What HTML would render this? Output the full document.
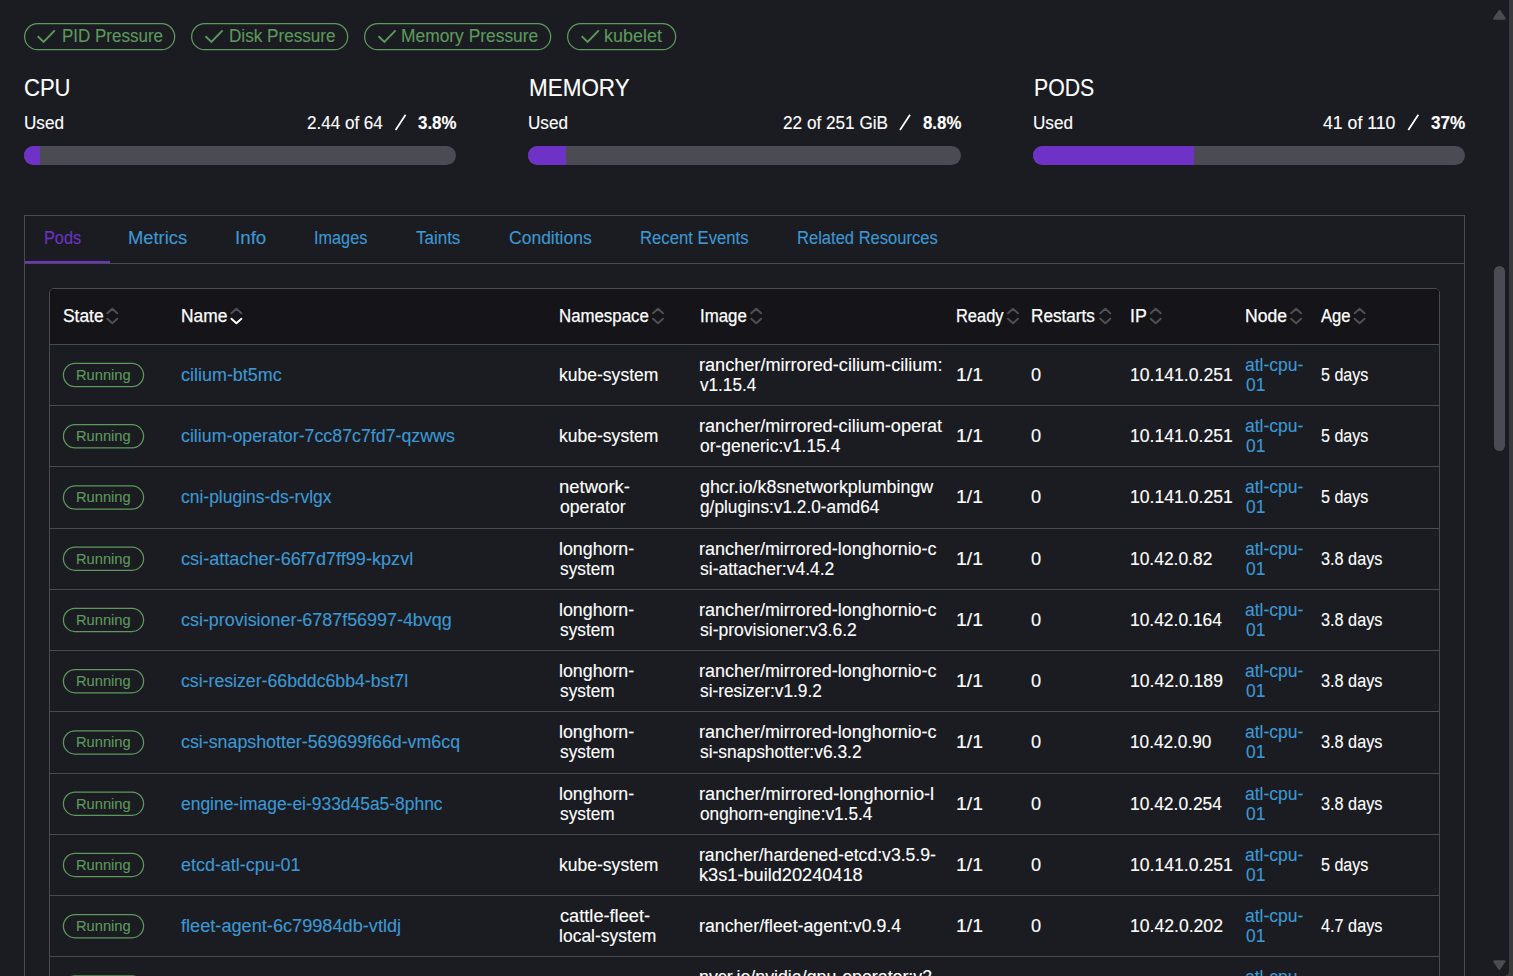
<!DOCTYPE html>
<html><head><meta charset="utf-8"><title>Node detail</title>
<style>
html,body{margin:0;padding:0;}
body{width:1513px;height:976px;overflow:hidden;background:#1b1c21;position:relative;font-family:"Liberation Sans",sans-serif;font-size:17.5px;color:#ffffff;}
.t{position:absolute;white-space:pre;line-height:20px;-webkit-text-stroke:0.12px currentColor;}
.h{-webkit-text-stroke:0.25px #fff;}
.r{position:absolute;box-sizing:border-box;}
svg{position:absolute;left:0;top:0;overflow:visible;}
</style></head><body>

<div class="r" style="left:1505px;top:0px;width:8px;height:976px;background:#3a3a3b;"></div>
<div class="r" style="left:0px;top:-10px;width:1509px;height:986px;background:#1b1c21;border-bottom-right-radius:5px;"></div>
<div class="r" style="left:1494px;top:266px;width:11px;height:185px;background:#4a4b53;border-radius:5.5px;"></div>
<svg width="1513" height="976"><path d="M1499.5 11.1 L1504.6 18.5 L1494.4 18.5 Z" fill="#4a4b53" stroke="#4a4b53" stroke-width="2.4" stroke-linejoin="round"/><path d="M1499.35 968.7 L1504.3 961.4 L1494.4 961.4 Z" fill="#4a4b53" stroke="#4a4b53" stroke-width="2.4" stroke-linejoin="round"/></svg>
<div class="r" style="left:24.0px;top:146px;width:432.3px;height:19px;background:#4a4b53;border-radius:9.5px;overflow:hidden;"><div style="width:16.4px;height:100%;background:#6f32c6;"></div></div>
<div class="r" style="left:528.3px;top:146px;width:432.3px;height:19px;background:#4a4b53;border-radius:9.5px;overflow:hidden;"><div style="width:38.0px;height:100%;background:#6f32c6;"></div></div>
<div class="r" style="left:1033.0px;top:146px;width:432.3px;height:19px;background:#4a4b53;border-radius:9.5px;overflow:hidden;"><div style="width:161.2px;height:100%;background:#6f32c6;"></div></div>
<div class="r" style="left:24px;top:215px;width:1441px;height:800px;border:1px solid #4a4b52;"></div>
<div class="r" style="left:25px;top:263px;width:1439px;height:1px;background:#4a4b52;"></div>
<div class="r" style="left:25px;top:260.5px;width:85px;height:2.5px;background:#6f32c6;"></div>
<div class="r" style="left:49px;top:288px;width:1391px;height:720px;border:1px solid #4a4b52;border-radius:5px;background:#1b1c21;overflow:hidden;"></div>
<div class="r" style="left:50px;top:289px;width:1389px;height:55px;background:#141419;border-top-left-radius:4px;border-top-right-radius:4px;"></div>
<div class="r" style="left:50px;top:344px;width:1389px;height:1px;background:#4a4b52;"></div>
<div class="r" style="left:50px;top:405px;width:1389px;height:1px;background:#4a4b52;"></div>
<div class="r" style="left:50px;top:466px;width:1389px;height:1px;background:#4a4b52;"></div>
<div class="r" style="left:50px;top:528px;width:1389px;height:1px;background:#4a4b52;"></div>
<div class="r" style="left:50px;top:589px;width:1389px;height:1px;background:#4a4b52;"></div>
<div class="r" style="left:50px;top:650px;width:1389px;height:1px;background:#4a4b52;"></div>
<div class="r" style="left:50px;top:711px;width:1389px;height:1px;background:#4a4b52;"></div>
<div class="r" style="left:50px;top:773px;width:1389px;height:1px;background:#4a4b52;"></div>
<div class="r" style="left:50px;top:834px;width:1389px;height:1px;background:#4a4b52;"></div>
<div class="r" style="left:50px;top:895px;width:1389px;height:1px;background:#4a4b52;"></div>
<div class="r" style="left:50px;top:956px;width:1389px;height:1px;background:#4a4b52;"></div>
<svg width="1513" height="976" fill="none" stroke-linecap="round" stroke-linejoin="round"><rect x="24.625" y="23.625" width="150.05" height="26.05" rx="13.03" stroke="#5d995d" stroke-width="1.25"/><rect x="191.625" y="23.625" width="156.05" height="26.05" rx="13.03" stroke="#5d995d" stroke-width="1.25"/><rect x="364.625" y="23.625" width="186.05" height="26.05" rx="13.03" stroke="#5d995d" stroke-width="1.25"/><rect x="567.625" y="23.625" width="108.05" height="26.05" rx="13.03" stroke="#5d995d" stroke-width="1.25"/><path d="M37.7 36.3 L43.6 42 L54.8 30.4" stroke="#5d995d" stroke-width="1.9" stroke-linecap="butt" stroke-linejoin="miter"/><path d="M205.5 36.3 L211.4 42 L222.6 30.4" stroke="#5d995d" stroke-width="1.9" stroke-linecap="butt" stroke-linejoin="miter"/><path d="M378.5 36.3 L384.4 42 L395.6 30.4" stroke="#5d995d" stroke-width="1.9" stroke-linecap="butt" stroke-linejoin="miter"/><path d="M581.7 36.3 L587.6 42 L598.8 30.4" stroke="#5d995d" stroke-width="1.9" stroke-linecap="butt" stroke-linejoin="miter"/><rect x="63.42" y="363.43" width="80.15" height="23.15" rx="11.57" stroke="#5d995d" stroke-width="1.25"/><rect x="63.42" y="424.68" width="80.15" height="23.15" rx="11.57" stroke="#5d995d" stroke-width="1.25"/><rect x="63.42" y="485.93" width="80.15" height="23.15" rx="11.57" stroke="#5d995d" stroke-width="1.25"/><rect x="63.42" y="547.17" width="80.15" height="23.15" rx="11.57" stroke="#5d995d" stroke-width="1.25"/><rect x="63.42" y="608.42" width="80.15" height="23.15" rx="11.57" stroke="#5d995d" stroke-width="1.25"/><rect x="63.42" y="669.67" width="80.15" height="23.15" rx="11.57" stroke="#5d995d" stroke-width="1.25"/><rect x="63.42" y="730.92" width="80.15" height="23.15" rx="11.57" stroke="#5d995d" stroke-width="1.25"/><rect x="63.42" y="792.17" width="80.15" height="23.15" rx="11.57" stroke="#5d995d" stroke-width="1.25"/><rect x="63.42" y="853.42" width="80.15" height="23.15" rx="11.57" stroke="#5d995d" stroke-width="1.25"/><rect x="63.42" y="914.67" width="80.15" height="23.15" rx="11.57" stroke="#5d995d" stroke-width="1.25"/><rect x="63.42" y="975.92" width="80.15" height="23.15" rx="11.57" stroke="#5d995d" stroke-width="1.25"/><path d="M107.3 313.3 L112.3 308.7 L117.3 313.3" stroke="#4f5058" stroke-width="1.9"/><path d="M107.3 318.7 L112.3 323.3 L117.3 318.7" stroke="#4f5058" stroke-width="1.9"/><path d="M231.4 313.3 L236.4 308.7 L241.4 313.3" stroke="#4f5058" stroke-width="1.9"/><path d="M231.4 318.7 L236.4 323.3 L241.4 318.7" stroke="#ffffff" stroke-width="1.9"/><path d="M653.0 313.3 L658.0 308.7 L663.0 313.3" stroke="#4f5058" stroke-width="1.9"/><path d="M653.0 318.7 L658.0 323.3 L663.0 318.7" stroke="#4f5058" stroke-width="1.9"/><path d="M751.2 313.3 L756.2 308.7 L761.2 313.3" stroke="#4f5058" stroke-width="1.9"/><path d="M751.2 318.7 L756.2 323.3 L761.2 318.7" stroke="#4f5058" stroke-width="1.9"/><path d="M1008.0 313.3 L1013.0 308.7 L1018.0 313.3" stroke="#4f5058" stroke-width="1.9"/><path d="M1008.0 318.7 L1013.0 323.3 L1018.0 318.7" stroke="#4f5058" stroke-width="1.9"/><path d="M1100.3 313.3 L1105.3 308.7 L1110.3 313.3" stroke="#4f5058" stroke-width="1.9"/><path d="M1100.3 318.7 L1105.3 323.3 L1110.3 318.7" stroke="#4f5058" stroke-width="1.9"/><path d="M1150.7 313.3 L1155.7 308.7 L1160.7 313.3" stroke="#4f5058" stroke-width="1.9"/><path d="M1150.7 318.7 L1155.7 323.3 L1160.7 318.7" stroke="#4f5058" stroke-width="1.9"/><path d="M1291.1 313.3 L1296.1 308.7 L1301.1 313.3" stroke="#4f5058" stroke-width="1.9"/><path d="M1291.1 318.7 L1296.1 323.3 L1301.1 318.7" stroke="#4f5058" stroke-width="1.9"/><path d="M1354.6 313.3 L1359.6 308.7 L1364.6 313.3" stroke="#4f5058" stroke-width="1.9"/><path d="M1354.6 318.7 L1359.6 323.3 L1364.6 318.7" stroke="#4f5058" stroke-width="1.9"/><path d="M395.6 130.0 L405.6 114.7" stroke="#ffffff" stroke-width="1.75" stroke-linecap="butt"/><path d="M900.0 130.0 L910.0 114.7" stroke="#ffffff" stroke-width="1.75" stroke-linecap="butt"/><path d="M1408.3 130.0 L1418.3 114.7" stroke="#ffffff" stroke-width="1.75" stroke-linecap="butt"/></svg>
<span class="t" style="left:61.63px;top:26.00px;transform:scaleX(0.9704);transform-origin:0 0;color:#5d995d;">PID Pressure</span>
<span class="t" style="left:228.52px;top:26.00px;transform:scaleX(0.9778);transform-origin:0 0;color:#5d995d;">Disk Pressure</span>
<span class="t" style="left:401.01px;top:26.00px;transform:scaleX(0.9937);transform-origin:0 0;color:#5d995d;">Memory Pressure</span>
<span class="t" style="left:604.37px;top:26.00px;transform:scaleX(1.0258);transform-origin:0 0;color:#5d995d;">kubelet</span>
<span class="t" style="left:23.98px;top:78.20px;transform:scaleX(0.9185);transform-origin:0 0;font-size:24px;">CPU</span>
<span class="t" style="left:528.86px;top:78.20px;transform:scaleX(0.9356);transform-origin:0 0;font-size:24px;">MEMORY</span>
<span class="t" style="left:1033.71px;top:78.20px;transform:scaleX(0.8863);transform-origin:0 0;font-size:24px;">PODS</span>
<span class="t" style="left:23.92px;top:112.90px;transform:scaleX(0.9790);transform-origin:0 0;">Used</span>
<span class="t" style="left:528.32px;top:112.90px;transform:scaleX(0.9790);transform-origin:0 0;">Used</span>
<span class="t" style="left:1033.02px;top:112.90px;transform:scaleX(0.9790);transform-origin:0 0;">Used</span>
<span class="t" style="left:306.70px;top:112.90px;transform:scaleX(0.9742);transform-origin:0 0;">2.44 of 64</span>
<span class="t" style="left:418.40px;top:112.60px;transform:scaleX(0.8891);transform-origin:0 0;font-size:19px;font-weight:700;">3.8%</span>
<span class="t" style="left:782.60px;top:112.90px;transform:scaleX(0.9817);transform-origin:0 0;">22 of 251 GiB</span>
<span class="t" style="left:922.60px;top:112.60px;transform:scaleX(0.8868);transform-origin:0 0;font-size:19px;font-weight:700;">8.8%</span>
<span class="t" style="left:1322.50px;top:112.90px;transform:scaleX(1.0104);transform-origin:0 0;">41 of 110</span>
<span class="t" style="left:1431.00px;top:112.60px;transform:scaleX(0.9047);transform-origin:0 0;font-size:19px;font-weight:700;">37%</span>
<span class="t" style="left:44.07px;top:227.70px;transform:scaleX(0.9300);transform-origin:0 0;color:#6f32c6;">Pods</span>
<span class="t" style="left:128.25px;top:227.70px;transform:scaleX(1.0478);transform-origin:0 0;color:#3d98d3;">Metrics</span>
<span class="t" style="left:235.43px;top:227.70px;transform:scaleX(1.0708);transform-origin:0 0;color:#3d98d3;">Info</span>
<span class="t" style="left:313.97px;top:227.70px;transform:scaleX(0.9287);transform-origin:0 0;color:#3d98d3;">Images</span>
<span class="t" style="left:415.70px;top:227.70px;transform:scaleX(0.9703);transform-origin:0 0;color:#3d98d3;">Taints</span>
<span class="t" style="left:508.90px;top:227.70px;transform:scaleX(1.0007);transform-origin:0 0;color:#3d98d3;">Conditions</span>
<span class="t" style="left:640.05px;top:227.70px;transform:scaleX(0.9535);transform-origin:0 0;color:#3d98d3;">Recent Events</span>
<span class="t" style="left:797.15px;top:227.70px;transform:scaleX(0.9461);transform-origin:0 0;color:#3d98d3;">Related Resources</span>
<span class="t h" style="left:63.00px;top:305.70px;transform:scaleX(0.9943);transform-origin:0 0;">State</span>
<span class="t h" style="left:181.11px;top:305.70px;transform:scaleX(0.9923);transform-origin:0 0;">Name</span>
<span class="t h" style="left:559.44px;top:305.70px;transform:scaleX(0.9613);transform-origin:0 0;">Namespace</span>
<span class="t h" style="left:699.94px;top:305.70px;transform:scaleX(0.9636);transform-origin:0 0;">Image</span>
<span class="t h" style="left:955.56px;top:305.70px;transform:scaleX(0.9391);transform-origin:0 0;">Ready</span>
<span class="t h" style="left:1031.42px;top:305.70px;transform:scaleX(0.9797);transform-origin:0 0;">Restarts</span>
<span class="t h" style="left:1129.98px;top:305.70px;transform:scaleX(1.0160);transform-origin:0 0;">IP</span>
<span class="t h" style="left:1244.80px;top:305.70px;transform:scaleX(1.0049);transform-origin:0 0;">Node</span>
<span class="t h" style="left:1320.80px;top:305.70px;transform:scaleX(0.9472);transform-origin:0 0;">Age</span>
<span class="t" style="left:76.02px;top:364.95px;transform:scaleX(0.9774);transform-origin:0 0;font-size:15px;color:#5d995d;">Running</span>
<span class="t" style="left:181.00px;top:364.90px;transform:scaleX(1.0258);transform-origin:0 0;color:#3d98d3;">cilium-bt5mc</span>
<span class="t" style="left:559.20px;top:364.90px;transform:scaleX(1.0018);transform-origin:0 0;">kube-system</span>
<span class="t" style="left:699.27px;top:354.90px;transform:scaleX(1.0345);transform-origin:0 0;">rancher/mirrored-cilium-cilium:</span>
<span class="t" style="left:700.30px;top:374.90px;transform:scaleX(0.9797);transform-origin:0 0;">v1.15.4</span>
<span class="t" style="left:955.79px;top:364.90px;transform:scaleX(1.1065);transform-origin:0 0;">1/1</span>
<span class="t" style="left:1031.30px;top:364.90px;transform:scaleX(1.0400);transform-origin:0 0;">0</span>
<span class="t" style="left:1129.99px;top:364.90px;transform:scaleX(1.0055);transform-origin:0 0;">10.141.0.251</span>
<span class="t" style="left:1245.20px;top:354.90px;transform:scaleX(0.9996);transform-origin:0 0;color:#3d98d3;">atl-cpu-</span>
<span class="t" style="left:1245.50px;top:374.90px;transform:scaleX(0.9983);transform-origin:0 0;color:#3d98d3;">01</span>
<span class="t" style="left:1321.00px;top:364.90px;transform:scaleX(0.9187);transform-origin:0 0;">5 days</span>
<span class="t" style="left:76.02px;top:426.20px;transform:scaleX(0.9774);transform-origin:0 0;font-size:15px;color:#5d995d;">Running</span>
<span class="t" style="left:181.00px;top:426.15px;transform:scaleX(1.0165);transform-origin:0 0;color:#3d98d3;">cilium-operator-7cc87c7fd7-qzwws</span>
<span class="t" style="left:559.20px;top:426.15px;transform:scaleX(1.0018);transform-origin:0 0;">kube-system</span>
<span class="t" style="left:699.27px;top:416.15px;transform:scaleX(1.0329);transform-origin:0 0;">rancher/mirrored-cilium-operat</span>
<span class="t" style="left:700.30px;top:436.15px;transform:scaleX(0.9949);transform-origin:0 0;">or-generic:v1.15.4</span>
<span class="t" style="left:955.79px;top:426.15px;transform:scaleX(1.1065);transform-origin:0 0;">1/1</span>
<span class="t" style="left:1031.30px;top:426.15px;transform:scaleX(1.0400);transform-origin:0 0;">0</span>
<span class="t" style="left:1129.99px;top:426.15px;transform:scaleX(1.0055);transform-origin:0 0;">10.141.0.251</span>
<span class="t" style="left:1245.20px;top:416.15px;transform:scaleX(0.9996);transform-origin:0 0;color:#3d98d3;">atl-cpu-</span>
<span class="t" style="left:1245.50px;top:436.15px;transform:scaleX(0.9983);transform-origin:0 0;color:#3d98d3;">01</span>
<span class="t" style="left:1321.00px;top:426.15px;transform:scaleX(0.9187);transform-origin:0 0;">5 days</span>
<span class="t" style="left:76.02px;top:487.45px;transform:scaleX(0.9774);transform-origin:0 0;font-size:15px;color:#5d995d;">Running</span>
<span class="t" style="left:181.00px;top:487.40px;transform:scaleX(0.9981);transform-origin:0 0;color:#3d98d3;">cni-plugins-ds-rvlgx</span>
<span class="t" style="left:558.84px;top:477.40px;transform:scaleX(1.0577);transform-origin:0 0;">network-</span>
<span class="t" style="left:559.90px;top:497.40px;transform:scaleX(1.0068);transform-origin:0 0;">operator</span>
<span class="t" style="left:700.30px;top:477.40px;transform:scaleX(1.0203);transform-origin:0 0;">ghcr.io/k8snetworkplumbingw</span>
<span class="t" style="left:700.30px;top:497.40px;transform:scaleX(0.9858);transform-origin:0 0;">g/plugins:v1.2.0-amd64</span>
<span class="t" style="left:955.79px;top:487.40px;transform:scaleX(1.1065);transform-origin:0 0;">1/1</span>
<span class="t" style="left:1031.30px;top:487.40px;transform:scaleX(1.0400);transform-origin:0 0;">0</span>
<span class="t" style="left:1129.99px;top:487.40px;transform:scaleX(1.0055);transform-origin:0 0;">10.141.0.251</span>
<span class="t" style="left:1245.20px;top:477.40px;transform:scaleX(0.9996);transform-origin:0 0;color:#3d98d3;">atl-cpu-</span>
<span class="t" style="left:1245.50px;top:497.40px;transform:scaleX(0.9983);transform-origin:0 0;color:#3d98d3;">01</span>
<span class="t" style="left:1321.00px;top:487.40px;transform:scaleX(0.9187);transform-origin:0 0;">5 days</span>
<span class="t" style="left:76.02px;top:548.70px;transform:scaleX(0.9774);transform-origin:0 0;font-size:15px;color:#5d995d;">Running</span>
<span class="t" style="left:181.00px;top:548.65px;transform:scaleX(1.0350);transform-origin:0 0;color:#3d98d3;">csi-attacher-66f7d7ff99-kpzvl</span>
<span class="t" style="left:558.88px;top:538.65px;transform:scaleX(1.0163);transform-origin:0 0;">longhorn-</span>
<span class="t" style="left:559.90px;top:558.65px;transform:scaleX(0.9864);transform-origin:0 0;">system</span>
<span class="t" style="left:699.27px;top:538.65px;transform:scaleX(1.0263);transform-origin:0 0;">rancher/mirrored-longhornio-c</span>
<span class="t" style="left:700.30px;top:558.65px;transform:scaleX(1.0008);transform-origin:0 0;">si-attacher:v4.4.2</span>
<span class="t" style="left:955.79px;top:548.65px;transform:scaleX(1.1065);transform-origin:0 0;">1/1</span>
<span class="t" style="left:1031.30px;top:548.65px;transform:scaleX(1.0400);transform-origin:0 0;">0</span>
<span class="t" style="left:1130.00px;top:548.65px;transform:scaleX(0.9953);transform-origin:0 0;">10.42.0.82</span>
<span class="t" style="left:1245.20px;top:538.65px;transform:scaleX(0.9996);transform-origin:0 0;color:#3d98d3;">atl-cpu-</span>
<span class="t" style="left:1245.50px;top:558.65px;transform:scaleX(0.9983);transform-origin:0 0;color:#3d98d3;">01</span>
<span class="t" style="left:1321.00px;top:548.65px;transform:scaleX(0.9291);transform-origin:0 0;">3.8 days</span>
<span class="t" style="left:76.02px;top:609.95px;transform:scaleX(0.9774);transform-origin:0 0;font-size:15px;color:#5d995d;">Running</span>
<span class="t" style="left:181.00px;top:609.90px;transform:scaleX(1.0229);transform-origin:0 0;color:#3d98d3;">csi-provisioner-6787f56997-4bvqg</span>
<span class="t" style="left:558.88px;top:599.90px;transform:scaleX(1.0163);transform-origin:0 0;">longhorn-</span>
<span class="t" style="left:559.90px;top:619.90px;transform:scaleX(0.9864);transform-origin:0 0;">system</span>
<span class="t" style="left:699.27px;top:599.90px;transform:scaleX(1.0263);transform-origin:0 0;">rancher/mirrored-longhornio-c</span>
<span class="t" style="left:700.30px;top:619.90px;transform:scaleX(1.0015);transform-origin:0 0;">si-provisioner:v3.6.2</span>
<span class="t" style="left:955.79px;top:609.90px;transform:scaleX(1.1065);transform-origin:0 0;">1/1</span>
<span class="t" style="left:1031.30px;top:609.90px;transform:scaleX(1.0400);transform-origin:0 0;">0</span>
<span class="t" style="left:1130.01px;top:609.90px;transform:scaleX(0.9944);transform-origin:0 0;">10.42.0.164</span>
<span class="t" style="left:1245.20px;top:599.90px;transform:scaleX(0.9996);transform-origin:0 0;color:#3d98d3;">atl-cpu-</span>
<span class="t" style="left:1245.50px;top:619.90px;transform:scaleX(0.9983);transform-origin:0 0;color:#3d98d3;">01</span>
<span class="t" style="left:1321.00px;top:609.90px;transform:scaleX(0.9291);transform-origin:0 0;">3.8 days</span>
<span class="t" style="left:76.02px;top:671.20px;transform:scaleX(0.9774);transform-origin:0 0;font-size:15px;color:#5d995d;">Running</span>
<span class="t" style="left:181.00px;top:671.15px;transform:scaleX(1.0107);transform-origin:0 0;color:#3d98d3;">csi-resizer-66bddc6bb4-bst7l</span>
<span class="t" style="left:558.88px;top:661.15px;transform:scaleX(1.0163);transform-origin:0 0;">longhorn-</span>
<span class="t" style="left:559.90px;top:681.15px;transform:scaleX(0.9864);transform-origin:0 0;">system</span>
<span class="t" style="left:699.27px;top:661.15px;transform:scaleX(1.0263);transform-origin:0 0;">rancher/mirrored-longhornio-c</span>
<span class="t" style="left:700.30px;top:681.15px;transform:scaleX(0.9864);transform-origin:0 0;">si-resizer:v1.9.2</span>
<span class="t" style="left:955.79px;top:671.15px;transform:scaleX(1.1065);transform-origin:0 0;">1/1</span>
<span class="t" style="left:1031.30px;top:671.15px;transform:scaleX(1.0400);transform-origin:0 0;">0</span>
<span class="t" style="left:1129.99px;top:671.15px;transform:scaleX(1.0053);transform-origin:0 0;">10.42.0.189</span>
<span class="t" style="left:1245.20px;top:661.15px;transform:scaleX(0.9996);transform-origin:0 0;color:#3d98d3;">atl-cpu-</span>
<span class="t" style="left:1245.50px;top:681.15px;transform:scaleX(0.9983);transform-origin:0 0;color:#3d98d3;">01</span>
<span class="t" style="left:1321.00px;top:671.15px;transform:scaleX(0.9291);transform-origin:0 0;">3.8 days</span>
<span class="t" style="left:76.02px;top:732.45px;transform:scaleX(0.9774);transform-origin:0 0;font-size:15px;color:#5d995d;">Running</span>
<span class="t" style="left:181.00px;top:732.40px;transform:scaleX(1.0172);transform-origin:0 0;color:#3d98d3;">csi-snapshotter-569699f66d-vm6cq</span>
<span class="t" style="left:558.88px;top:722.40px;transform:scaleX(1.0163);transform-origin:0 0;">longhorn-</span>
<span class="t" style="left:559.90px;top:742.40px;transform:scaleX(0.9864);transform-origin:0 0;">system</span>
<span class="t" style="left:699.27px;top:722.40px;transform:scaleX(1.0263);transform-origin:0 0;">rancher/mirrored-longhornio-c</span>
<span class="t" style="left:700.30px;top:742.40px;transform:scaleX(0.9950);transform-origin:0 0;">si-snapshotter:v6.3.2</span>
<span class="t" style="left:955.79px;top:732.40px;transform:scaleX(1.1065);transform-origin:0 0;">1/1</span>
<span class="t" style="left:1031.30px;top:732.40px;transform:scaleX(1.0400);transform-origin:0 0;">0</span>
<span class="t" style="left:1130.02px;top:732.40px;transform:scaleX(0.9831);transform-origin:0 0;">10.42.0.90</span>
<span class="t" style="left:1245.20px;top:722.40px;transform:scaleX(0.9996);transform-origin:0 0;color:#3d98d3;">atl-cpu-</span>
<span class="t" style="left:1245.50px;top:742.40px;transform:scaleX(0.9983);transform-origin:0 0;color:#3d98d3;">01</span>
<span class="t" style="left:1321.00px;top:732.40px;transform:scaleX(0.9291);transform-origin:0 0;">3.8 days</span>
<span class="t" style="left:76.02px;top:793.70px;transform:scaleX(0.9774);transform-origin:0 0;font-size:15px;color:#5d995d;">Running</span>
<span class="t" style="left:181.00px;top:793.65px;transform:scaleX(0.9957);transform-origin:0 0;color:#3d98d3;">engine-image-ei-933d45a5-8phnc</span>
<span class="t" style="left:558.88px;top:783.65px;transform:scaleX(1.0163);transform-origin:0 0;">longhorn-</span>
<span class="t" style="left:559.90px;top:803.65px;transform:scaleX(0.9864);transform-origin:0 0;">system</span>
<span class="t" style="left:699.26px;top:783.65px;transform:scaleX(1.0372);transform-origin:0 0;">rancher/mirrored-longhornio-l</span>
<span class="t" style="left:700.30px;top:803.65px;transform:scaleX(0.9840);transform-origin:0 0;">onghorn-engine:v1.5.4</span>
<span class="t" style="left:955.79px;top:793.65px;transform:scaleX(1.1065);transform-origin:0 0;">1/1</span>
<span class="t" style="left:1031.30px;top:793.65px;transform:scaleX(1.0400);transform-origin:0 0;">0</span>
<span class="t" style="left:1130.01px;top:793.65px;transform:scaleX(0.9944);transform-origin:0 0;">10.42.0.254</span>
<span class="t" style="left:1245.20px;top:783.65px;transform:scaleX(0.9996);transform-origin:0 0;color:#3d98d3;">atl-cpu-</span>
<span class="t" style="left:1245.50px;top:803.65px;transform:scaleX(0.9983);transform-origin:0 0;color:#3d98d3;">01</span>
<span class="t" style="left:1321.00px;top:793.65px;transform:scaleX(0.9291);transform-origin:0 0;">3.8 days</span>
<span class="t" style="left:76.02px;top:854.95px;transform:scaleX(0.9774);transform-origin:0 0;font-size:15px;color:#5d995d;">Running</span>
<span class="t" style="left:181.00px;top:854.90px;transform:scaleX(1.0242);transform-origin:0 0;color:#3d98d3;">etcd-atl-cpu-01</span>
<span class="t" style="left:559.20px;top:854.90px;transform:scaleX(1.0018);transform-origin:0 0;">kube-system</span>
<span class="t" style="left:699.29px;top:844.90px;transform:scaleX(1.0064);transform-origin:0 0;">rancher/hardened-etcd:v3.5.9-</span>
<span class="t" style="left:699.26px;top:864.90px;transform:scaleX(1.0385);transform-origin:0 0;">k3s1-build20240418</span>
<span class="t" style="left:955.79px;top:854.90px;transform:scaleX(1.1065);transform-origin:0 0;">1/1</span>
<span class="t" style="left:1031.30px;top:854.90px;transform:scaleX(1.0400);transform-origin:0 0;">0</span>
<span class="t" style="left:1129.99px;top:854.90px;transform:scaleX(1.0055);transform-origin:0 0;">10.141.0.251</span>
<span class="t" style="left:1245.20px;top:844.90px;transform:scaleX(0.9996);transform-origin:0 0;color:#3d98d3;">atl-cpu-</span>
<span class="t" style="left:1245.50px;top:864.90px;transform:scaleX(0.9983);transform-origin:0 0;color:#3d98d3;">01</span>
<span class="t" style="left:1321.00px;top:854.90px;transform:scaleX(0.9187);transform-origin:0 0;">5 days</span>
<span class="t" style="left:76.02px;top:916.20px;transform:scaleX(0.9774);transform-origin:0 0;font-size:15px;color:#5d995d;">Running</span>
<span class="t" style="left:181.00px;top:916.15px;transform:scaleX(1.0379);transform-origin:0 0;color:#3d98d3;">fleet-agent-6c79984db-vtldj</span>
<span class="t" style="left:559.90px;top:906.15px;transform:scaleX(1.0400);transform-origin:0 0;">cattle-fleet-</span>
<span class="t" style="left:558.90px;top:926.15px;transform:scaleX(1.0004);transform-origin:0 0;">local-system</span>
<span class="t" style="left:699.29px;top:916.15px;transform:scaleX(1.0136);transform-origin:0 0;">rancher/fleet-agent:v0.9.4</span>
<span class="t" style="left:955.79px;top:916.15px;transform:scaleX(1.1065);transform-origin:0 0;">1/1</span>
<span class="t" style="left:1031.30px;top:916.15px;transform:scaleX(1.0400);transform-origin:0 0;">0</span>
<span class="t" style="left:1129.99px;top:916.15px;transform:scaleX(1.0053);transform-origin:0 0;">10.42.0.202</span>
<span class="t" style="left:1245.20px;top:906.15px;transform:scaleX(0.9996);transform-origin:0 0;color:#3d98d3;">atl-cpu-</span>
<span class="t" style="left:1245.50px;top:926.15px;transform:scaleX(0.9983);transform-origin:0 0;color:#3d98d3;">01</span>
<span class="t" style="left:1321.00px;top:916.15px;transform:scaleX(0.9291);transform-origin:0 0;">4.7 days</span>
<span class="t" style="left:76.02px;top:977.45px;transform:scaleX(0.9774);transform-origin:0 0;font-size:15px;color:#5d995d;">Running</span>
<span class="t" style="left:181.00px;top:977.40px;transform:scaleX(0.9450);transform-origin:0 0;color:#3d98d3;">gpu-feature-discovery-x7k2p</span>
<span class="t" style="left:560.20px;top:977.40px;transform:scaleX(0.9450);transform-origin:0 0;">gpu-operator</span>
<span class="t" style="left:699.28px;top:967.40px;transform:scaleX(1.0152);transform-origin:0 0;">nvcr.io/nvidia/gpu-operator:v2</span>
<span class="t" style="left:700.30px;top:987.40px;transform:scaleX(0.9450);transform-origin:0 0;">4.3.0</span>
<span class="t" style="left:955.79px;top:977.40px;transform:scaleX(1.1065);transform-origin:0 0;">1/1</span>
<span class="t" style="left:1031.30px;top:977.40px;transform:scaleX(1.0400);transform-origin:0 0;">0</span>
<span class="t" style="left:1130.06px;top:977.40px;transform:scaleX(0.9450);transform-origin:0 0;">10.42.0.211</span>
<span class="t" style="left:1245.20px;top:967.40px;transform:scaleX(0.9996);transform-origin:0 0;color:#3d98d3;">atl-cpu-</span>
<span class="t" style="left:1245.50px;top:987.40px;transform:scaleX(0.9983);transform-origin:0 0;color:#3d98d3;">01</span>
<span class="t" style="left:1321.00px;top:977.40px;transform:scaleX(0.9291);transform-origin:0 0;">3.8 days</span>

</body></html>
